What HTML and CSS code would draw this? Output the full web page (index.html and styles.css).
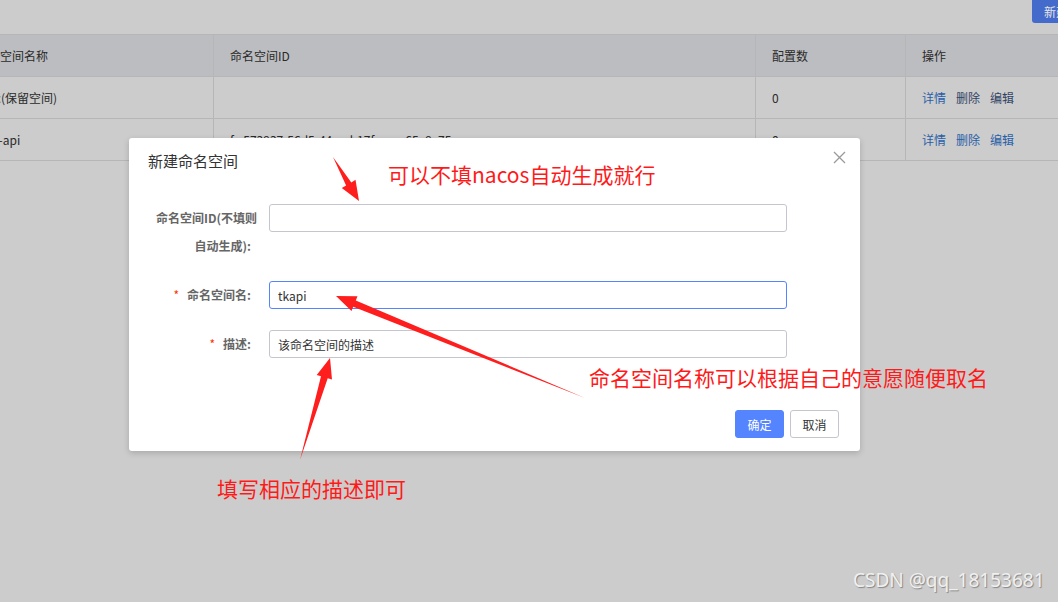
FILE: index.html
```html
<!DOCTYPE html>
<html lang="zh-CN">
<head>
<meta charset="utf-8">
<title>命名空间</title>
<link rel="stylesheet" href="styles.css">
</head>
<body>
<div class="page">
  <div class="toolbar">
    <button class="btn-new">新建命名空间</button>
  </div>
  <div class="table">
    <div class="row head">
      <div class="cell">命名空间名称</div>
      <div class="cell">命名空间ID</div>
      <div class="cell">配置数</div>
      <div class="cell">操作</div>
    </div>
    <div class="row">
      <div class="cell first">public(保留空间)</div>
      <div class="cell"></div>
      <div class="cell">0</div>
      <div class="cell ops"><a class="lk">详情</a><a class="lk dark">删除</a><a class="lk dark">编辑</a></div>
    </div>
    <div class="row">
      <div class="cell first2">tk-api</div>
      <div class="cell">f e573937-56d5-44ea-b17f-aaaa65e9c75</div>
      <div class="cell">0</div>
      <div class="cell ops"><a class="lk">详情</a><a class="lk">删除</a><a class="lk">编辑</a></div>
    </div>
  </div>

  <div class="dialog">
    <div class="dlg-head">
      <span class="dlg-title">新建命名空间</span>
      <span class="dlg-close" aria-label="关闭">
        <svg width="13" height="13" viewBox="0 0 13 13"><path d="M1 1 L12 12 M12 1 L1 12" stroke="#9a9a9a" stroke-width="1.3" fill="none"/></svg>
      </span>
    </div>
    <div class="form">
      <div class="field">
        <label class="lbl"><span class="l1">命名空间ID(不填则</span><br>自动生成):</label>
        <div class="ctl"><input class="inp" type="text" value=""></div>
      </div>
      <div class="field">
        <label class="lbl"><span class="req">*</span>命名空间名:</label>
        <div class="ctl"><input class="inp focus" type="text" value="tkapi"></div>
      </div>
      <div class="field">
        <label class="lbl"><span class="req">*</span>描述:</label>
        <div class="ctl"><input class="inp" type="text" value="该命名空间的描述"></div>
      </div>
    </div>
    <div class="dlg-foot">
      <button class="btn primary">确定</button>
      <button class="btn normal">取消</button>
    </div>
  </div>

  <div class="note n1">可以不填nacos自动生成就行</div>
  <div class="note n2">命名空间名称可以根据自己的意愿随便取名</div>
  <div class="note n3">填写相应的描述即可</div>

  <svg class="arrows" width="1058" height="602" viewBox="0 0 1058 602">
    <polygon fill="#ff1e1e" points="333,157 346.1,185.5 341.8,188.0 359,201 355.5,179.8 351.3,182.4"/>
    <polygon fill="#ff1e1e" points="585,398 355.8,300.4 357.5,296.2 336,296 351.5,311.0 353.2,306.8"/>
    <polygon fill="#ff1e1e" points="300,460 327.7,378.2 332.0,379.4 330,358 316.7,374.9 321.0,376.2"/>
  </svg>

  <div class="watermark">CSDN @qq_18153681</div>
</div>
</body>
</html>
```

FILE: styles.css
```css
html, body {
  margin: 0;
  padding: 0;
}
body {
  width: 1058px;
  height: 602px;
  overflow: hidden;
  background: #cccccc;
  font-family: "Noto Sans CJK SC", "Noto Sans", sans-serif;
  font-size: 12px;
  color: #2a2a2a;
}
.page {
  position: relative;
  width: 1058px;
  height: 602px;
  overflow: hidden;
}
.toolbar {
  height: 34px;
  display: flex;
  justify-content: flex-end;
  align-items: flex-start;
}
.btn-new {
  height: 23px;
  margin-right: -70px;
  padding: 0 12px;
  border: none;
  border-radius: 0 0 0 3px;
  background: #446acc;
  color: #e6e6e6;
  font-family: inherit;
  font-size: 12px;
  line-height: 23px;
}
.table {
  margin-left: -50px;
  width: 1140px;
  border-top: 1px solid #b6b6b8;
}
.row {
  display: grid;
  grid-template-columns: 264px 542px 150px 184px;
  height: 41px;
  border-bottom: 1px solid #b6b6b8;
}
.row.head {
  background: #bcbdc0;
}
.cell {
  display: flex;
  align-items: center;
  padding-left: 16px;
  border-right: 1px solid #b6b6b8;
  white-space: nowrap;
  overflow: hidden;
}
.row .cell:first-child { padding-left: 26px; }
.row .cell.first { padding-left: 16px; }
.row .cell.first2 { padding-left: 38px; }
.cell:last-child { border-right: none; }
.ops { gap: 10px; }
.lk { color: #2960a8; text-decoration: none; }
.lk.dark { color: #334466; }

.dialog {
  position: absolute;
  left: 129px;
  top: 138px;
  width: 731px;
  height: 313px;
  background: #ffffff;
  border-radius: 3px;
  box-shadow: 0 2px 6px rgba(0, 0, 0, 0.18);
  box-sizing: border-box;
  display: flex;
  flex-direction: column;
}
.dlg-head {
  display: flex;
  justify-content: space-between;
  align-items: flex-start;
  padding: 12px 14px 0 19px;
  height: 54px;
  box-sizing: border-box;
}
.dlg-title {
  font-size: 15px;
  line-height: 22px;
  color: #333333;
}
.dlg-close {
  display: flex;
  width: 13px;
  height: 13px;
  margin-top: 1px;
}
.form {
  padding-top: 12px;
  display: flex;
  flex-direction: column;
  gap: 21px;
}
.field {
  display: grid;
  grid-template-columns: 122px 518px;
  column-gap: 18px;
  align-items: start;
}
.lbl {
  text-align: right;
  font-size: 12px;
  line-height: 28px;
  font-weight: bold;
  color: #666666;
  white-space: nowrap;
}
.l1 {
  position: relative;
  left: 6px;
}
.req {
  color: #ff3000;
  margin-right: 8px;
  font-weight: normal;
}
.inp {
  display: block;
  width: 518px;
  height: 28px;
  box-sizing: border-box;
  border: 1px solid #c4c6cf;
  border-radius: 3px;
  padding: 0 8px;
  font-family: inherit;
  font-size: 12px;
  color: #333333;
  outline: none;
  background: #ffffff;
}
.inp.focus {
  border-color: #5584ff;
}
.dlg-foot {
  margin-top: auto;
  display: flex;
  justify-content: flex-end;
  gap: 6px;
  padding: 0 21px 13px 0;
}
.btn {
  width: 49px;
  height: 28px;
  border-radius: 3px;
  font-family: inherit;
  font-size: 12px;
  padding: 0;
  box-sizing: border-box;
}
.btn.primary {
  background: #5584ff;
  border: 1px solid #5584ff;
  color: #ffffff;
}
.btn.normal {
  background: #ffffff;
  border: 1px solid #c4c6cf;
  color: #333333;
}

.note {
  position: absolute;
  color: #ff1a1a;
  font-size: 21px;
  line-height: 28px;
  white-space: nowrap;
}
.n1 { left: 388px; top: 160px; }
.n2 { left: 589px; top: 363px; }
.n3 { left: 217px; top: 474px; }

.arrows {
  position: absolute;
  left: 0;
  top: 0;
  pointer-events: none;
}
.watermark {
  position: absolute;
  left: 853px;
  top: 567px;
  font-family: "Noto Sans", sans-serif;
  font-size: 19px;
  line-height: 26px;
  color: #f0f0f0;
  text-shadow: 1px 1px 1px rgba(0, 0, 0, 0.35);
  white-space: nowrap;
}
```
